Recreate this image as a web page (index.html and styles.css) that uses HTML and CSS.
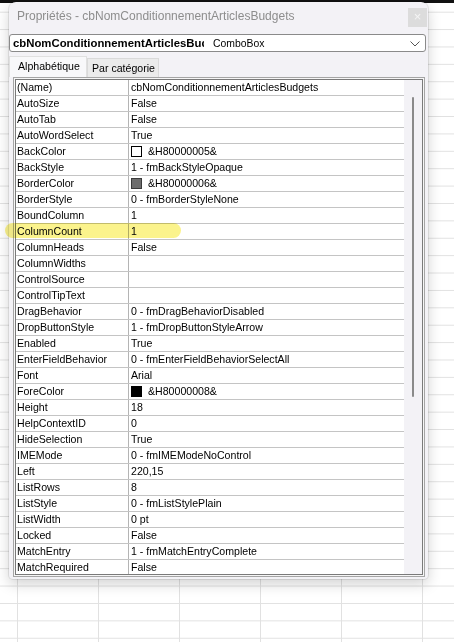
FILE: index.html
```html
<!DOCTYPE html>
<html lang="fr">
<head>
<meta charset="utf-8">
<title>Propriétés</title>
<link rel="stylesheet" href="styles.css">
</head>
<body>
<div class="topstrip"></div>

<div class="dialog">
  <div class="titlebar">
    <span class="title">Propriétés - cbNomConditionnementArticlesBudgets</span>
    <span class="close">×</span>
  </div>

  <div class="objsel">
    <span class="objname">cbNomConditionnementArticlesBudgets</span>
    <span class="objtype">ComboBox</span>
    <svg class="chev" width="10" height="6" viewBox="0 0 10 6"><path d="M0.5 0.5 L5 5 L9.5 0.5" fill="none" stroke="#555" stroke-width="1"/></svg>
  </div>

  <div class="tabs">
    <div class="tab active">Alphabétique</div>
    <div class="tab">Par catégorie</div>
  </div>

  <div class="panel">
    <div class="panel-inner">
      <div class="grid">
        <div class="row"><span class="name">(Name)</span><span class="val">cbNomConditionnementArticlesBudgets</span></div>
        <div class="row"><span class="name">AutoSize</span><span class="val">False</span></div>
        <div class="row"><span class="name">AutoTab</span><span class="val">False</span></div>
        <div class="row"><span class="name">AutoWordSelect</span><span class="val">True</span></div>
        <div class="row"><span class="name">BackColor</span><span class="val"><i class="sw sw-white"></i>&amp;H80000005&amp;</span></div>
        <div class="row"><span class="name">BackStyle</span><span class="val">1 - fmBackStyleOpaque</span></div>
        <div class="row"><span class="name">BorderColor</span><span class="val"><i class="sw sw-gray"></i>&amp;H80000006&amp;</span></div>
        <div class="row"><span class="name">BorderStyle</span><span class="val">0 - fmBorderStyleNone</span></div>
        <div class="row"><span class="name">BoundColumn</span><span class="val">1</span></div>
        <div class="row"><span class="name">ColumnCount</span><span class="val">1</span></div>
        <div class="row"><span class="name">ColumnHeads</span><span class="val">False</span></div>
        <div class="row"><span class="name">ColumnWidths</span><span class="val"></span></div>
        <div class="row"><span class="name">ControlSource</span><span class="val"></span></div>
        <div class="row"><span class="name">ControlTipText</span><span class="val"></span></div>
        <div class="row"><span class="name">DragBehavior</span><span class="val">0 - fmDragBehaviorDisabled</span></div>
        <div class="row"><span class="name">DropButtonStyle</span><span class="val">1 - fmDropButtonStyleArrow</span></div>
        <div class="row"><span class="name">Enabled</span><span class="val">True</span></div>
        <div class="row"><span class="name">EnterFieldBehavior</span><span class="val">0 - fmEnterFieldBehaviorSelectAll</span></div>
        <div class="row"><span class="name">Font</span><span class="val">Arial</span></div>
        <div class="row"><span class="name">ForeColor</span><span class="val"><i class="sw sw-black"></i>&amp;H80000008&amp;</span></div>
        <div class="row"><span class="name">Height</span><span class="val">18</span></div>
        <div class="row"><span class="name">HelpContextID</span><span class="val">0</span></div>
        <div class="row"><span class="name">HideSelection</span><span class="val">True</span></div>
        <div class="row"><span class="name">IMEMode</span><span class="val">0 - fmIMEModeNoControl</span></div>
        <div class="row"><span class="name">Left</span><span class="val">220,15</span></div>
        <div class="row"><span class="name">ListRows</span><span class="val">8</span></div>
        <div class="row"><span class="name">ListStyle</span><span class="val">0 - fmListStylePlain</span></div>
        <div class="row"><span class="name">ListWidth</span><span class="val">0 pt</span></div>
        <div class="row"><span class="name">Locked</span><span class="val">False</span></div>
        <div class="row"><span class="name">MatchEntry</span><span class="val">1 - fmMatchEntryComplete</span></div>
        <div class="row"><span class="name">MatchRequired</span><span class="val">False</span></div>
      </div>
      <div class="vscroll"><div class="thumb"></div></div>
    </div>
  </div>
</div>

<div class="marker"></div>
</body>
</html>
```

FILE: styles.css
```css
html, body {
  margin: 0;
  padding: 0;
}

body {
  width: 454px;
  height: 642px;
  overflow: hidden;
  position: relative;
  font-family: "Liberation Sans", Arial, sans-serif;
  background-color: #ffffff;
  background-image:
    linear-gradient(to right, #e1e1e1 1px, transparent 1px),
    linear-gradient(to bottom, #e1e1e1 1px, transparent 1px);
  background-size: 81px 100%, 100% 17.4px;
  background-position: 17px 0, 0 11.7px;
}

.topstrip {
  height: 3px;
  background: #111111;
}

/* ---------- dialog window ---------- */
.dialog {
  position: absolute;
  left: 9px;
  top: 2px;
  width: 419px;
  height: 577px;
  box-sizing: border-box;
  background: #f3f2f6;
  border-radius: 7px 7px 4px 4px;
  box-shadow: 0 0 0 1px rgba(0,0,0,0.08), 0 5px 14px rgba(0,0,0,0.18);
  display: flex;
  flex-direction: column;
}

.titlebar {
  height: 32px;
  display: flex;
  align-items: flex-start;
  justify-content: space-between;
}

.title {
  margin-top: 7px;
  padding-left: 8px;
  font-size: 12px;
  color: #8d8d8d;
  white-space: nowrap;
}

.close {
  margin-top: 6px;
  margin-right: 1px;
  width: 19px;
  height: 19px;
  background: #dcdcdc;
  color: #f4f4f4;
  font-size: 13px;
  line-height: 18px;
  text-align: center;
}

/* ---------- object selector ---------- */
.objsel {
  height: 18px;
  margin-right: 2px;
  box-sizing: border-box;
  border: 1px solid #8a8a8a;
  border-radius: 3px;
  background: #ffffff;
  display: flex;
  align-items: center;
  padding-left: 3px;
}

.objname {
  flex: 0 0 191px;
  overflow: hidden;
  white-space: nowrap;
  font-weight: bold;
  font-size: 11.35px;
  color: #000;
}

.objtype {
  margin-left: 9px;
  font-size: 10.4px;
  color: #000;
  flex: 1;
  white-space: nowrap;
}

.chev {
  margin-right: 5px;
  margin-top: 1px;
}

/* ---------- tabs ---------- */
.tabs {
  height: 25px;
  display: flex;
  align-items: flex-end;
  font-size: 10.6px;
  color: #000;
}

.tab {
  box-sizing: border-box;
  height: 19px;
  padding: 3px 0 0 4px;
  width: 72px;
  white-space: nowrap;
  background: #ebebeb;
  border: 1px solid #dadada;
  border-bottom: none;
}

.tab.active {
  height: 21px;
  width: 78px;
  padding-left: 8px;
  padding-top: 3px;
  background: #f8f8fa;
  border-color: #e0e0e0;
}

/* ---------- property list ---------- */
.panel {
  margin-left: 4px;
  margin-right: 3px;
  height: 500px;
  box-sizing: border-box;
  border: 1px solid #a5a5a5;
  padding: 1px;
  background: #f6f6f6;
}

.panel-inner {
  height: 100%;
  box-sizing: border-box;
  border: 1px solid #7a7a7a;
  display: flex;
  overflow: hidden;
  background: #ffffff;
}

.grid {
  flex: 1;
  font-size: 10.6px;
  color: #000;
}

.row {
  display: grid;
  grid-template-columns: 113px 1fr;
  height: 16px;
  box-sizing: border-box;
  border-bottom: 1px solid #c4c4c4;
  line-height: 15px;
}

.name {
  box-sizing: border-box;
  border-right: 1px solid #b4b4b4;
  padding-left: 1px;
  white-space: nowrap;
  overflow: hidden;
}

.val {
  padding-left: 2px;
  white-space: nowrap;
  overflow: hidden;
  display: flex;
  align-items: center;
}

.sw {
  display: inline-block;
  width: 11px;
  height: 11px;
  box-sizing: border-box;
  border: 1px solid #000;
  margin-right: 6px;
}

.sw-white { background: #ffffff; }
.sw-gray  { background: #6d6d6d; border-color: #3a3a3a; }
.sw-black { background: #000000; }

.vscroll {
  width: 18px;
  background: #f3f2f6;
  position: relative;
}

.thumb {
  position: absolute;
  left: 8px;
  top: 17px;
  width: 2px;
  height: 300px;
  background: #8a8a8a;
  border-radius: 1px;
}

/* ---------- yellow highlighter annotation ---------- */
.marker {
  position: absolute;
  left: 5px;
  top: 223px;
  width: 176px;
  height: 15px;
  border-radius: 8px;
  background: #fbf38c;
  mix-blend-mode: multiply;
}
```
